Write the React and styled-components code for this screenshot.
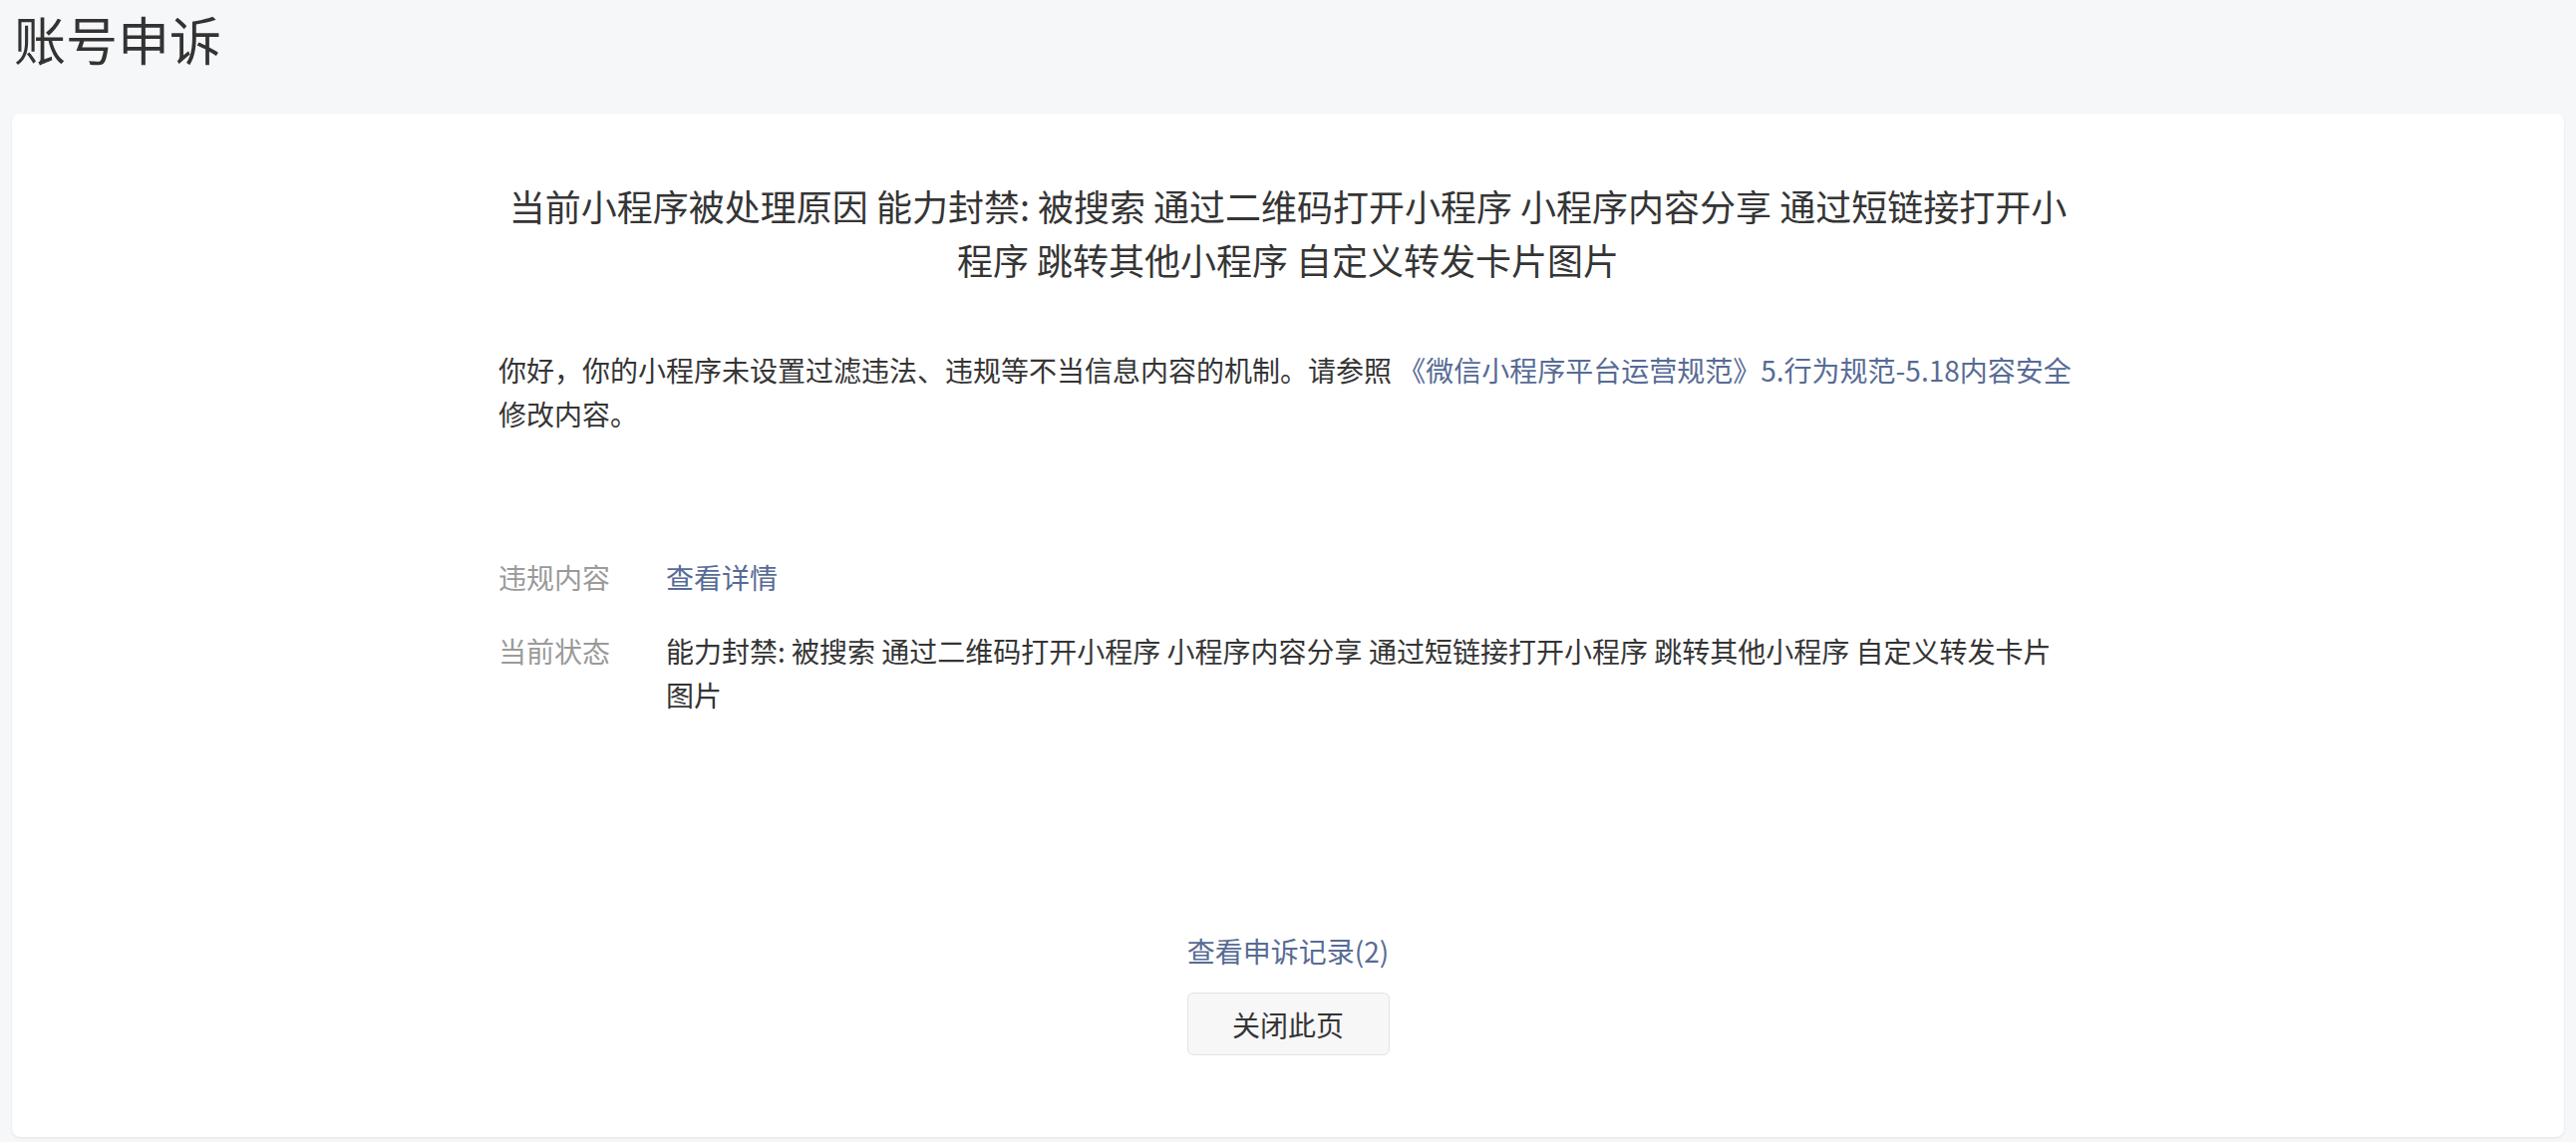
import React from "react";
import styled, { createGlobalStyle } from "styled-components";

const GlobalStyle = createGlobalStyle`
  html, body {
    margin: 0;
    padding: 0;
    background: #f6f7f9;
  }
  body {
    font-family: "Noto Sans CJK SC", "Noto Sans", "Liberation Sans", sans-serif;
    color: #353535;
  }
`;

const Page = styled.div`
  display: flex;
  flex-direction: column;
  padding: 0 12px 5px 12px;
`;

const PageTitle = styled.h1`
  margin: 0;
  height: 114px;
  padding-left: 2px;
  font-size: 52px;
  font-weight: 400;
  line-height: 78px;
  color: #333333;
`;

const Card = styled.section`
  background: #ffffff;
  border-radius: 8px;
  box-shadow: 0 1px 3px rgba(0, 0, 0, 0.08), 0 0 1px rgba(0, 0, 0, 0.05);
  display: flex;
  flex-direction: column;
  align-items: center;
  padding: 65px 0 82px;
`;

const Content = styled.div`
  width: 1584px;
  display: flex;
  flex-direction: column;
`;

const Reason = styled.h2`
  margin: 0;
  font-size: 36px;
  font-weight: 400;
  line-height: 54px;
  text-align: center;
  color: #353535;
`;

const Message = styled.p`
  margin: 62px 0 0;
  font-size: 28px;
  line-height: 44px;
  color: #353535;
`;

const Link = styled.a`
  color: #576b95;
  text-decoration: none;
  cursor: pointer;
`;

const InfoList = styled.dl`
  margin: 120px 0 0;
  display: flex;
  flex-direction: column;
  gap: 30px;
`;

const InfoRow = styled.div`
  display: grid;
  grid-template-columns: 168px 1fr;
  font-size: 28px;
  line-height: 44px;
`;

const Label = styled.dt`
  margin: 0;
  color: #9a9a9a;
`;

const Value = styled.dd`
  margin: 0;
  color: #353535;
`;

const Footer = styled.div`
  margin-top: 213px;
  display: flex;
  flex-direction: column;
  align-items: center;
  gap: 20px;
`;

const RecordLink = styled(Link)`
  font-size: 28px;
  line-height: 44px;
`;

const CloseButton = styled.button`
  width: 203px;
  height: 63px;
  border: 1px solid #e3e3e3;
  border-radius: 6px;
  background: #f7f7f7;
  font-family: inherit;
  font-size: 28px;
  color: #353535;
  cursor: pointer;
  padding: 0;
`;

export default function App() {
  return (
    <>
      <GlobalStyle />
      <Page>
        <PageTitle>账号申诉</PageTitle>
        <Card>
          <Content>
            <Reason>
              当前小程序被处理原因 能力封禁: 被搜索 通过二维码打开小程序 小程序内容分享 通过短链接打开小程序 跳转其他小程序 自定义转发卡片图片
            </Reason>
            <Message>
              你好，你的小程序未设置过滤违法、违规等不当信息内容的机制。请参照{" "}
              <Link>《微信小程序平台运营规范》5.行为规范-5.18内容安全</Link>
              修改内容。
            </Message>
            <InfoList>
              <InfoRow>
                <Label>违规内容</Label>
                <Value>
                  <Link>查看详情</Link>
                </Value>
              </InfoRow>
              <InfoRow>
                <Label>当前状态</Label>
                <Value>
                  能力封禁: 被搜索 通过二维码打开小程序 小程序内容分享 通过短链接打开小程序 跳转其他小程序 自定义转发卡片图片
                </Value>
              </InfoRow>
            </InfoList>
          </Content>
          <Footer>
            <RecordLink>查看申诉记录(2)</RecordLink>
            <CloseButton>关闭此页</CloseButton>
          </Footer>
        </Card>
      </Page>
    </>
  );
}
